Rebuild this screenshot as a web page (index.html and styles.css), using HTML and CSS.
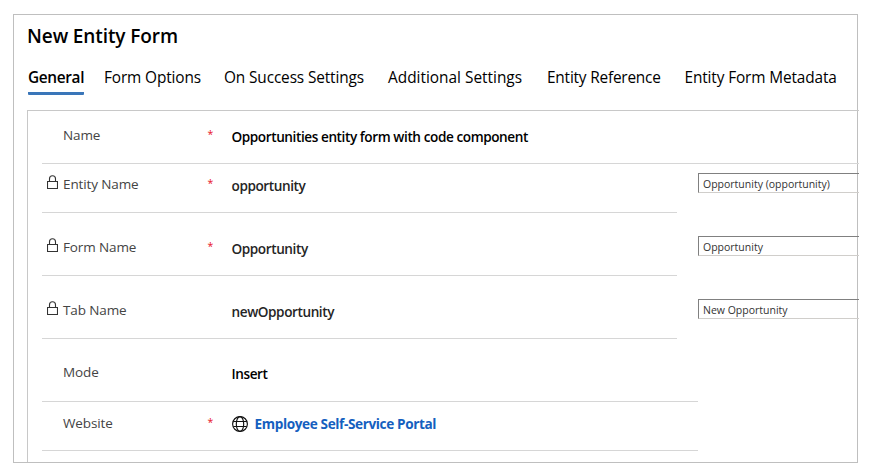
FILE: index.html
```
<!DOCTYPE html>
<html lang="en">
<head>
<meta charset="utf-8">
<title>New Entity Form</title>
<link rel="stylesheet" href="styles.css">
</head>
<body>
<svg width="0" height="0" class="defs">
  <symbol id="lock" viewBox="0 0 11 15"><path d="M.5 6.5h10v7H.5zM2.5 6.500V3.800a3 3 0 0 1 6 0V6.500" fill="none" stroke="#333" stroke-width="1.1"/></symbol>
</svg>
<main class="frame">
  <h1 class="title">New Entity Form</h1>
  <nav class="tabs">
    <a class="tab active">General</a>
    <a class="tab">Form Options</a>
    <a class="tab">On Success Settings</a>
    <a class="tab wide">Additional Settings</a>
    <a class="tab narrow">Entity Reference</a>
    <a class="tab">Entity Form Metadata</a>
  </nav>
  <section class="panel">
    <div class="row first">
      <div class="field">
        <span class="icon"></span><span class="label">Name</span><span class="required">*</span>
        <span class="value">Opportunities entity form with code component</span>
      </div>
    </div>
    <div class="row short lookup">
      <div class="field">
        <svg class="icon"><use href="#lock"/></svg><span class="label">Entity Name</span><span class="required">*</span>
        <span class="value locked">opportunity</span>
      </div>
      <div class="input">Opportunity (opportunity)</div>
    </div>
    <div class="row lookup">
      <div class="field">
        <svg class="icon"><use href="#lock"/></svg><span class="label">Form Name</span><span class="required">*</span>
        <span class="value locked">Opportunity</span>
      </div>
      <div class="input">Opportunity</div>
    </div>
    <div class="row lookup">
      <div class="field">
        <svg class="icon"><use href="#lock"/></svg><span class="label">Tab Name</span><span class="required"></span>
        <span class="value locked">newOpportunity</span>
      </div>
      <div class="input">New Opportunity</div>
    </div>
    <div class="row half">
      <div class="field mode">
        <span class="icon"></span><span class="label">Mode</span><span class="required"></span>
        <span class="value">Insert</span>
      </div>
    </div>
    <div class="row short half">
      <div class="field website">
        <span class="icon"></span><span class="label">Website</span><span class="required">*</span>
        <span class="value link">
          <svg class="globe" viewBox="0 0 16 16"><g fill="none" stroke="#111" stroke-width="1.15"><circle cx="8" cy="8" r="7.4"/><ellipse cx="8" cy="8" rx="3.700" ry="7.400"/><path d="M1.300 5.500h13.400M1.300 10.500h13.400"/></g></svg>
          <a>Employee Self-Service Portal</a>
        </span>
      </div>
    </div>
  </section>
</main>
</body>
</html>
```
FILE: styles.css
```
* { box-sizing: border-box; }
body {
  margin: 0;
  padding: 14px 13px 0;
  background: #fff;
  color: #000;
  font-family: "Open Sans", "Noto Sans", sans-serif;
}
.defs { display: none; }
.frame {
  width: 845px;
  height: 449px;
  border: 1px solid #bfbfbf;
}
.title {
  margin: 7px 0 0 13px;
  font-size: 19px;
  line-height: 28px;
  font-weight: 600;
  letter-spacing: -0.1px;
}
.tabs {
  display: grid;
  grid-template-columns: 76px 120px 164px 159px 137.5px 160px;
  margin: 15px 0 0 14px;
  height: 30px;
}
.tab {
  justify-self: start;
  font-size: 15.4px;
  line-height: 25px;
  letter-spacing: -0.13px;
  white-space: nowrap;
}
.tab.wide { letter-spacing: 0; }
.tab.narrow { letter-spacing: -0.2px; }
.tab.active {
  width: 56px;
  border-bottom: 3px solid #3a76b9;
  border-radius: 1px;
  font-weight: 600;
  letter-spacing: -0.35px;
}
.panel {
  width: 832px;
  height: 352px;
  margin: 15px 0 0 13px;
  padding-left: 14px;
  border: solid #c8c8c8;
  border-width: 1px 0 0 1px;
}
.row {
  display: flex;
  justify-content: space-between;
  height: 63px;
}
.row.first { height: 53px; }
.row.short { height: 49px; }
.field {
  display: grid;
  grid-template-columns: 21px 144.500px 24px 1fr;
  align-items: end;
  width: 100%;
  padding-bottom: 18px;
  border-bottom: 1px solid #d6d6d6;
}
.lookup .field { width: 635px; }
.half .field { width: 656px; }
.icon {
  width: 11px;
  height: 15px;
  margin: 0 0 4px 5px;
}
.label {
  color: #444;
  font-size: 13.5px;
  line-height: 20px;
  letter-spacing: -0.12px;
}
.required {
  margin-bottom: 1px;
  color: #e81123;
  font-size: 10.5px;
  line-height: 20px;
}
.value {
  margin-bottom: -2px;
  font-size: 13.6px;
  line-height: 20px;
  font-weight: 600;
  letter-spacing: -0.42px;
}
.locked { color: #252525; }
.mode { padding-bottom: 19px; }
.website { padding-bottom: 17px; }
.link {
  display: flex;
  align-items: center;
  gap: 7px;
  margin-bottom: -1px;
  color: #155fbf;
  font-weight: 700;
  letter-spacing: -0.38px;
}
.globe { width: 16px; height: 16px; }
.input {
  align-self: flex-end;
  width: 161px;
  height: 20px;
  margin-bottom: 20px;
  padding-left: 4px;
  border: solid #808080;
  border-width: 1px 0 1px 1px;
  border-bottom-color: #d0cecb;
  color: #333;
  font-size: 10.5px;
  line-height: 20px;
}
```
